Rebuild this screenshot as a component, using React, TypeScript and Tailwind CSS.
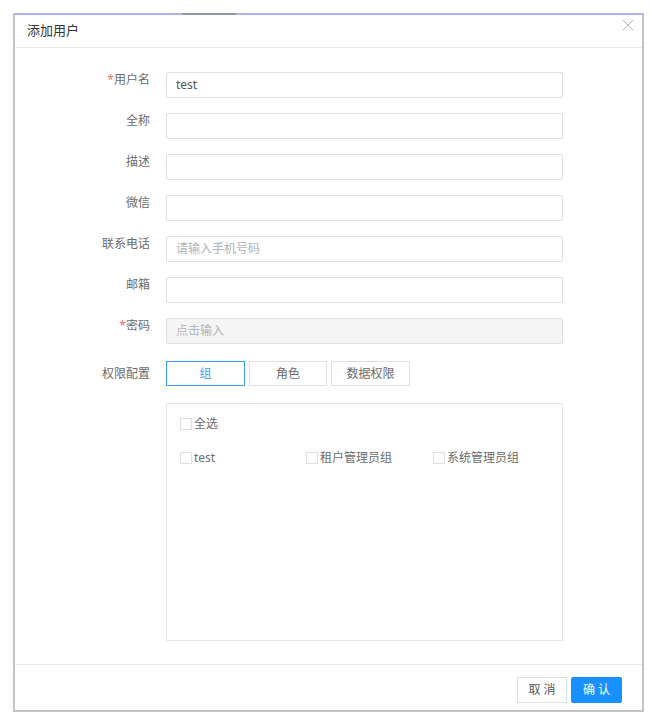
import React from "react";

const font = { fontFamily: '"Noto Sans", "Noto Sans CJK SC", sans-serif' };

function Row({ label, required, children, center }: { label: string; required?: boolean; children: React.ReactNode; center?: boolean }) {
  return (
    <div className={`flex ${center ? "items-center" : "items-start"} gap-[16px]`}>
      <div className="w-[135px] text-right text-[12px] leading-4 text-[#6b6b6b]">
        {required && <span className="text-[#f56c6c]">*</span>}
        {label}
      </div>
      {children}
    </div>
  );
}

function Input({ value, placeholder, disabled }: { value?: string; placeholder?: string; disabled?: boolean }) {
  return (
    <div
      className={`w-[397px] h-[26px] border border-[#dcdfe6] rounded-[2px] px-[9px] flex items-center text-[12px] ${
        disabled ? "bg-[#f5f5f5]" : "bg-white"
      }`}
    >
      {value ? <span className="text-[#555]">{value}</span> : <span className="text-[#b0b3b8]">{placeholder}</span>}
    </div>
  );
}

function Check({ label }: { label: string }) {
  return (
    <div className="flex items-center gap-[2px] text-[12px] text-[#6b6b6b]">
      <span className="w-[12px] h-[12px] border border-[#dcdfe6] bg-white inline-block" />
      <span>{label}</span>
    </div>
  );
}

export default function App() {
  return (
    <div className="w-[650px] h-[725px] bg-white pt-[13px] pl-[13px]" style={font}>
      <div className="relative w-[631px] h-[699px] border-2 border-[#c4c4c4] border-t-[#a9b3ee] bg-white flex flex-col">
        <div className="absolute -top-[2px] left-[167px] w-[54px] h-[2px] bg-[#8f95ad]" />
        <div className="h-[33px] border-b border-[#e8e8e8] flex items-center pl-[12px] relative">
          <span className="text-[13px] text-[#333]">添加用户</span>
          <svg className="absolute right-[8px] top-[4px]" width="12" height="12" viewBox="0 0 12 12">
            <path d="M1 1L11 11M11 1L1 11" stroke="#b4b4b4" strokeWidth="1" fill="none" />
          </svg>
        </div>
        <div className="flex-1 flex flex-col pt-[24px]">
          <div className="flex flex-col gap-[15px]">
            <Row label="用户名" required>
              <Input value="test" />
            </Row>
            <Row label="全称">
              <Input />
            </Row>
            <Row label="描述">
              <Input />
            </Row>
            <Row label="微信">
              <Input />
            </Row>
            <Row label="联系电话">
              <Input placeholder="请输入手机号码" />
            </Row>
            <Row label="邮箱">
              <Input />
            </Row>
            <Row label="密码" required>
              <Input placeholder="点击输入" disabled />
            </Row>
          </div>
          <div className="mt-[17px]">
            <Row label="权限配置" center>
              <div className="flex gap-[4px]">
                <div className="w-[79px] h-[25px] border border-[#409eff] text-[#409eff] text-[12px] flex items-center justify-center">组</div>
                <div className="w-[78px] h-[25px] border border-[#dcdfe6] text-[#6b6b6b] text-[12px] flex items-center justify-center">角色</div>
                <div className="w-[79px] h-[25px] border border-[#dcdfe6] text-[#6b6b6b] text-[12px] flex items-center justify-center">数据权限</div>
              </div>
            </Row>
          </div>
          <div className="mt-[17px] ml-[151px] w-[397px] h-[238px] border border-[#e4e7ed] pt-[11px] pl-[13px]">
            <Check label="全选" />
            <div className="flex mt-[16px]">
              <div className="w-[126px]">
                <Check label="test" />
              </div>
              <div className="w-[127px]">
                <Check label="租户管理员组" />
              </div>
              <div>
                <Check label="系统管理员组" />
              </div>
            </div>
          </div>
        </div>
        <div className="h-[46px] border-t border-[#e8e8e8] flex items-start justify-end pt-[12px] pr-[20px] gap-[4px]">
          <div className="w-[50px] h-[26px] border border-[#dcdfe6] bg-white text-[12px] text-[#555] flex items-center justify-center tracking-[3px] pl-[3px]">取消</div>
          <div className="w-[51px] h-[26px] bg-[#1890ff] rounded-[2px] text-[12px] text-white flex items-center justify-center tracking-[3px] pl-[3px]">确认</div>
        </div>
      </div>
    </div>
  );
}
